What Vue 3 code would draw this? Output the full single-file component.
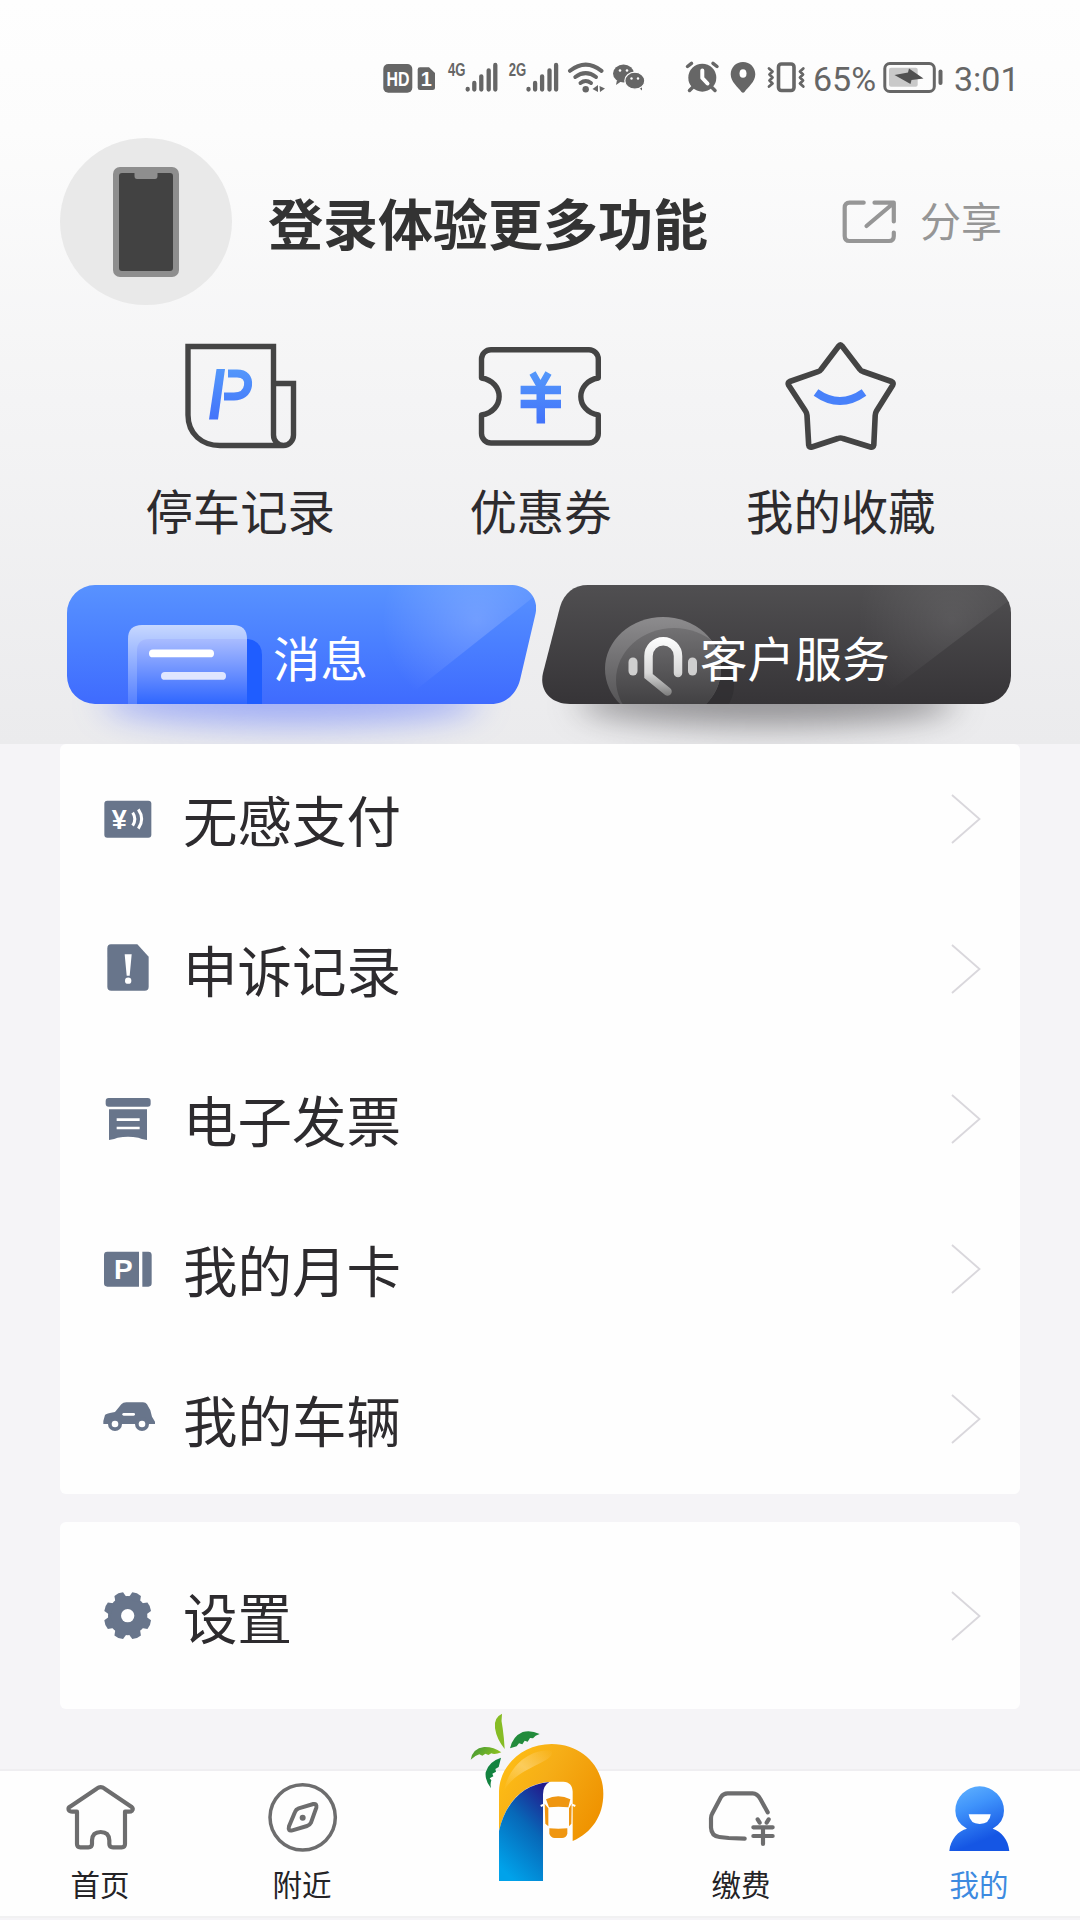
<template>
  <div class="page">
    <header class="hero">
      <!-- status bar -->
      <div class="status">
        <svg class="status-left" viewBox="0 0 270 40" width="270" height="40">
          <rect x="3.3" y="6" width="29" height="28.7" rx="5" fill="#666" />
          <text x="6.4" y="27.8" font-size="19.5" font-weight="700" fill="#fff" textLength="23" lengthAdjust="spacingAndGlyphs">HD</text>
          <path d="M40 9.3H49L55 15V29.5Q55 32 52.5 32H40Q37.7 32 37.7 29.5V11.5Q37.7 9.3 40 9.3Z" fill="#666" />
          <text x="46.3" y="28" font-size="20" font-weight="700" fill="#fff" text-anchor="middle">1</text>
          <g v-for="s in signals" :key="s.label" :transform="`translate(${s.x} 0)`">
            <text x="68" y="17.8" font-size="18.5" font-weight="700" fill="#666" textLength="17.5" lengthAdjust="spacingAndGlyphs">{{ s.label }}</text>
            <path d="M87.7 31V31.5M94.3 25V31.5M101.3 18.3V31.5M108.7 12.3V31.5M115.3 7V31.5" stroke="#666" stroke-width="4.3" stroke-linecap="round" />
          </g>
          <g fill="none" stroke="#666" stroke-width="4" stroke-linecap="round">
            <path d="M190 12.8Q205.7 0.5 221.5 12.8" />
            <path d="M195.3 19Q205.7 11.3 216 19" />
            <path d="M200.5 25Q205.7 21 211 25" />
          </g>
          <circle cx="205.7" cy="31.3" r="3.2" fill="#666" />
          <path d="M212.5 31L218 27V34ZM219.5 28L225 30.5L220 34Z" fill="#666" />
          <path d="M237 22L236 27L241 23.5Z" fill="#666" />
          <ellipse cx="243.5" cy="15.5" rx="10.5" ry="9" fill="#666" />
          <path d="M258 29L262 32.5L262 27Z" fill="#666" />
          <ellipse cx="254.8" cy="22.7" rx="10" ry="8.5" fill="#666" stroke="#fdfdfd" stroke-width="1.2" />
          <g fill="#fdfdfd">
            <circle cx="240" cy="12.5" r="1.3" />
            <circle cx="247" cy="12.5" r="1.3" />
            <circle cx="251.5" cy="20.5" r="1.2" />
            <circle cx="258" cy="20.5" r="1.2" />
          </g>
        </svg>
        <svg class="status-mid" viewBox="0 0 130 40" width="130" height="40">
          <g fill="none" stroke="#666" stroke-linecap="round" stroke-linejoin="round">
            <circle cx="22.3" cy="19.7" r="14" fill="#666" stroke="none" />
            <path d="M7.5 8.5L11.5 5.3M33 5.3L37 8.5M9.5 32.5L13 29M31.5 29L35 32.5" stroke-width="3.5" />
            <path d="M22.3 12.5V20L27.5 25.5" stroke="#fff" stroke-width="4" />
            <path d="M63 4C56 4 50.7 9.5 50.7 16.3C50.7 24 58 29 61.5 34Q63 35.5 64.5 34C68 29 75.3 24 75.3 16.3C75.3 9.5 70 4 63 4Z" fill="#666" stroke="none" />
            <ellipse cx="63" cy="15.5" rx="3.5" ry="4.3" fill="#fff" stroke="none" />
            <rect x="98.5" y="6" width="15.5" height="26.5" rx="3" stroke-width="3.6" />
            <path d="M89 10.5L92.5 13.5L89.5 16.5L92.5 19.5L89.5 22.5L92.5 25.5L89 28.5M123.3 10.5L120 13.5L123 16.5L120 19.5L123 22.5L120 25.5L123.3 28.5" stroke-width="2.8" />
          </g>
        </svg>
        <span class="percent">65%</span>
        <svg class="battery" viewBox="0 0 64 40" width="64" height="40">
          <rect x="2.8" y="5.5" width="49.5" height="28" rx="5" fill="none" stroke="#666" stroke-width="3" />
          <rect x="7" y="9.7" width="28.7" height="19" rx="2" fill="#c9c9c9" />
          <path d="M12.5 17L26 14.5L27 10.5L41.5 20.5L29.500 22L28.500 26Z" fill="#505050" />
          <rect x="56.5" y="11.5" width="4" height="15.5" rx="2" fill="#666" />
        </svg>
        <span class="clock">3:01</span>
      </div>

      <!-- login row -->
      <div class="profile">
        <div class="avatar">
          <svg viewBox="0 0 66 110" width="66" height="110">
            <rect width="66" height="110" rx="7" fill="#8e8e8e" />
            <path d="M9 6H21.5V9Q21.5 12 24 12H42Q44.5 12 44.5 9V6H57Q60 6 60 9V101Q60 104 57 104H9Q6 104 6 101V9Q6 6 9 6Z" fill="#424242" />
          </svg>
        </div>
        <h1>登录体验更多功能</h1>
        <div class="share">
          <svg viewBox="0 0 62 52" width="62" height="52" fill="none" stroke="#969696" stroke-width="4.2" stroke-linecap="round" stroke-linejoin="round">
            <path d="M25.7 6.7H11.5Q6.7 6.7 6.7 11.5V40Q6.7 45 11.5 45H51Q55.8 45 55.8 40V36.5" />
            <path d="M36.5 6.7H55.8V25.5M54.5 8L28.5 30" />
          </svg>
          <span>分享</span>
        </div>
      </div>

      <!-- shortcuts -->
      <div class="shortcuts">
        <div v-for="item in shortcuts" :key="item.icon" class="shortcut">
          <svg v-if="item.icon === 'record'" viewBox="0 0 122 116" width="122" height="116" fill="none" stroke="#444" stroke-width="5.4">
            <defs>
              <linearGradient id="blue" x1="0" y1="30" x2="0" y2="82" gradientUnits="userSpaceOnUse">
                <stop offset="0" stop-color="#5498fb" />
                <stop offset="1" stop-color="#4272fa" />
              </linearGradient>
            </defs>
            <g transform="translate(1 0)">
              <path d="M104 107.5H40C22 107.5 8 96 8 77V8.5H93.5V97A10 10.500 0 0 0 113.5 97V45.5H93.5" />
              <path d="M36.5 31H45L38 81.5H29Z" fill="url(#blue)" stroke="none" />
              <path d="M48 35.5H57C65 35.5 69 40 68 47.5C67 55 61 58.5 54 58.5H44" stroke="url(#blue)" stroke-width="8" />
            </g>
          </svg>
          <svg v-else-if="item.icon === 'coupon'" viewBox="0 0 130 116" width="130" height="116" fill="none" stroke="#444" stroke-width="5.4">
            <g transform="translate(0 4)">
              <path d="M16 7.7H114A9.5 9.5 0 0 1 123.3 17V36C100 40 100 69 123.3 73V91.5A9.5 9.5 0 0 1 114 101H16A9.5 9.5 0 0 1 6.5 91.5V73C30 69 30 40 6.5 36V17A9.5 9.5 0 0 1 16 7.7Z" stroke-linejoin="round" />
              <g stroke="url(#blue)">
                <path d="M57.5 31L65.5 45L73.5 31" stroke-width="7" />
                <path d="M65.7 44L65.8 81.5" stroke-width="8.5" />
                <path d="M45.6 48L86 48.1M45.6 62L86 62.1" stroke-width="8.5" />
              </g>
            </g>
          </svg>
          <svg v-else viewBox="0 0 122 116" width="122" height="116" fill="none" stroke="#444" stroke-width="5.6" stroke-linejoin="round">
            <g transform="translate(0 -1.5)">
              <path d="M58.8 9.5Q60.4 7 62 9.5L80 33Q81 34.500 83 35L111.500 45Q114 46.300 112.800 48.500L96.500 74.500Q95.300 76.500 95.200 79L93.800 108.500Q93.300 111.300 90.500 110.500L63 102Q60.400 101 57.800 102L32 110.500Q29 111.300 28.700 108.500L27 79Q26.900 76.500 25.500 74.500L8.500 48.500Q7.300 46.300 9.800 45L38 35.200Q40 34.500 41 33Z" />
              <path d="M36 56Q60 73 84 56" stroke="#4881fa" stroke-width="8" />
            </g>
          </svg>
          <span>{{ item.text }}</span>
        </div>
      </div>

      <!-- message / service buttons -->
      <div class="actions">
        <div class="action message">
          <svg class="shape" viewBox="0 0 469 119" width="469" height="119">
            <defs>
              <linearGradient id="msgBg" x1="0" y1="0" x2="0" y2="1">
                <stop offset="0" stop-color="#5892ff" />
                <stop offset="0.5" stop-color="#4a7fff" />
                <stop offset="1" stop-color="#3f6bfe" />
              </linearGradient>
              <linearGradient id="msgCard" x1="0" y1="0" x2="0" y2="1">
                <stop offset="0" stop-color="#c7d8ff" />
                <stop offset="1" stop-color="#5580ff" />
              </linearGradient>
              <linearGradient id="msgInner" x1="0" y1="0" x2="0" y2="1">
                <stop offset="0" stop-color="#a9bcff" />
                <stop offset="1" stop-color="#2f66ff" />
              </linearGradient>
              <radialGradient id="shine" cx="410" cy="35" r="95" gradientUnits="userSpaceOnUse">
                <stop offset="0" stop-color="#fff" stop-opacity="0.19" />
                <stop offset="1" stop-color="#fff" stop-opacity="0" />
              </radialGradient>
              <clipPath id="msgClip">
                <path d="M28 0H443C461 0 473 13 468 31L453 95C449 110 438 119 424 119H28A28 28 0 0 1 0 91V28A28 28 0 0 1 28 0Z" />
              </clipPath>
            </defs>
            <g clip-path="url(#msgClip)">
              <rect width="469" height="119" fill="url(#msgBg)" />
              <path d="M310 0H469V10L345 108H310Z" fill="url(#shine)" />
              <path d="M160 54H181Q195 56 195 70V119H160Z" fill="#1f5dff" />
              <path d="M61 119V54Q61 40 75 40H166Q180 40 180 54V119Z" fill="url(#msgCard)" />
              <path d="M70 119V66Q70 54 82 54H180V119Z" fill="url(#msgInner)" />
              <rect x="82" y="64.5" width="65" height="7.8" rx="3.9" fill="#fff" />
              <rect x="94" y="87" width="65" height="7.8" rx="3.9" fill="#dfe6ff" />
            </g>
          </svg>
          <span>消息</span>
        </div>
        <div class="action service">
          <svg class="shape" viewBox="0 0 469 119" width="469" height="119">
            <defs>
              <linearGradient id="svcBg" x1="0" y1="0" x2="0" y2="1">
                <stop offset="0" stop-color="#504f51" />
                <stop offset="1" stop-color="#363437" />
              </linearGradient>
              <linearGradient id="svcRing" x1="0" y1="32" x2="0" y2="119" gradientUnits="userSpaceOnUse">
                <stop offset="0" stop-color="#8d8c8e" />
                <stop offset="1" stop-color="#555456" />
              </linearGradient>
              <linearGradient id="svcInner" x1="0" y1="43" x2="0" y2="119" gradientUnits="userSpaceOnUse">
                <stop offset="0" stop-color="#727173" />
                <stop offset="1" stop-color="#424143" />
              </linearGradient>
              <linearGradient id="svcPhone" x1="0" y1="52" x2="0" y2="112" gradientUnits="userSpaceOnUse">
                <stop offset="0" stop-color="#fff" />
                <stop offset="0.6" stop-color="#d8d8d8" />
                <stop offset="1" stop-color="#777" />
              </linearGradient>
              <clipPath id="svcClip">
                <path d="M46 0H441A28 28 0 0 1 469 28V91A28 28 0 0 1 441 119H28C8 119 -3 105 1 88L18 22C22 8 32 0 46 0Z" />
              </clipPath>
              <clipPath id="ringClip">
                <ellipse cx="121" cy="84" rx="58" ry="52" />
              </clipPath>
            </defs>
            <g clip-path="url(#svcClip)">
              <rect width="469" height="119" fill="url(#svcBg)" />
              <path d="M310 0H469V14L345 108H310Z" fill="url(#shine)" opacity="0.5" />
              <ellipse cx="136" cy="100" rx="56" ry="46" fill="#2f2d30" opacity="0.7" />
              <ellipse cx="121" cy="84" rx="58" ry="52" fill="url(#svcRing)" />
              <ellipse cx="132" cy="95" rx="58" ry="52" fill="url(#svcInner)" clip-path="url(#ringClip)" />
              <path d="M136 88V71A14.7 14.7 0 0 0 106.5 71V91L125.5 106.5" fill="none" stroke="url(#svcPhone)" stroke-width="8.5" stroke-linecap="round" />
              <rect x="86.5" y="72.5" width="9" height="18" rx="4.5" fill="#cfcfcf" />
              <rect x="146" y="72.5" width="9" height="18" rx="4.5" fill="#cfcfcf" />
            </g>
          </svg>
          <span>客户服务</span>
        </div>
      </div>
    </header>

    <!-- menu lists -->
    <section v-for="(group, gi) in menus" :key="gi" class="card" :class="{ single: group.length === 1 }">
      <div v-for="row in group" :key="row.icon" class="row">
        <svg class="row-icon" viewBox="0 0 168 156" width="56" height="52" fill="#68758b">
          <template v-if="row.icon === 'pay'">
            <rect x="10" y="23" width="141" height="111" rx="9" />
            <text x="55" y="107" font-size="81" font-weight="700" fill="#fff" text-anchor="middle">¥</text>
            <path d="M95 59Q108 78 95 98M112 49Q132 78 112 107" fill="none" stroke="#fff" stroke-width="9" />
          </template>
          <template v-else-if="row.icon === 'appeal'">
            <path d="M30 4H109L143 41V131Q143 143 131 143H31Q19 143 19 131V16Q19 4 30 4Z" />
            <path d="M71 34H92L86 98H77Z" fill="#fff" />
            <circle cx="81.5" cy="113" r="9.5" fill="#fff" />
          </template>
          <template v-else-if="row.icon === 'invoice'">
            <rect x="14" y="15" width="135" height="26" rx="9" />
            <path d="M24 49H138V141Q120 138 112 134Q81 128 50 134Q42 138 24 141Z" />
            <path d="M47 80H116M47 105H116" stroke="#fff" stroke-width="8" />
          </template>
          <template v-else-if="row.icon === 'month'">
            <path d="M19 26H114V131H19Q9 131 9 121V36Q9 26 19 26ZM124 26H142Q152 26 152 36V121Q152 131 142 131H124Z" />
            <text x="67" y="108" font-size="84" font-weight="700" fill="#fff" text-anchor="middle">P</text>
          </template>
          <template v-else-if="row.icon === 'car'">
            <path d="M7 93V84L12 66Q15 61 42 57L61 34Q66 28 76 28H126Q134 28 138 34L148 52L153 71L162 86V93Z" />
            <circle cx="42" cy="93" r="21" />
            <circle cx="123" cy="93" r="21" />
            <circle cx="42" cy="93" r="10" fill="#fff" />
            <circle cx="123" cy="93" r="10" fill="#fff" />
            <path d="M68 64H98" stroke="#fff" stroke-width="8" stroke-linecap="round" />
          </template>
          <template v-else>
            <g transform="translate(0 -2)">
              <circle cx="80" cy="79" r="59" />
              <path v-for="n in 8" :key="n" d="M61 30L66 9Q80 4 94 9L99 30Z" :transform="`rotate(${n * 45 - 22.5} 80 79)`" />
              <circle cx="80" cy="79" r="20" fill="#fff" />
            </g>
          </template>
        </svg>
        <span class="row-text">{{ row.text }}</span>
        <svg class="arrow" viewBox="0 0 32 52" width="32" height="52">
          <path d="M2 2L29.5 26L2 50" fill="none" stroke="#d9d7dc" stroke-width="1.8" />
        </svg>
      </div>
    </section>

    <!-- bottom tabs -->
    <nav class="tabs">
      <div class="tab">
        <svg viewBox="0 0 225 216" width="75" height="72" fill="none" stroke="#6d6d6e" stroke-width="12.5" stroke-linejoin="round">
          <path d="M101 20Q113 11 125 20L205 74Q212 80 207 86Q204 89 198 89H186V186Q186 196 176 196H150Q139 196 139 186V175Q138 150 113 150Q88 150 87 175V186Q87 196 76 196H52Q42 196 42 186V89H28Q20 89 17 84Q15 77 21 74Z" />
        </svg>
        <span>首页</span>
      </div>
      <div class="tab">
        <svg viewBox="0 0 225 216" width="75" height="72" fill="none" stroke="#6d6d6e" stroke-width="10.5" stroke-linejoin="round">
          <circle cx="113" cy="106" r="98" />
          <path d="M101 79Q93 82 90 90L72 133Q68 149 82 145L126 132Q134 130 138 122L154 77Q156 64 145 66Z" stroke-width="12" />
          <circle cx="113" cy="107" r="9" fill="#6d6d6e" stroke="none" />
        </svg>
        <span>附近</span>
      </div>
      <div class="tab logo">
        <svg viewBox="90 60 410 520" width="136.7" height="173.3">
          <defs>
            <linearGradient id="sun" x1="0.1" y1="0.2" x2="1" y2="0.7">
              <stop offset="0" stop-color="#fdbb14" />
              <stop offset="0.35" stop-color="#f6ae17" />
              <stop offset="1" stop-color="#ef9200" />
            </linearGradient>
            <linearGradient id="sea" x1="0.8" y1="0" x2="0.3" y2="1">
              <stop offset="0" stop-color="#231a8c" />
              <stop offset="0.45" stop-color="#0768b8" />
              <stop offset="1" stop-color="#00a2ea" />
            </linearGradient>
            <linearGradient id="leaf" x1="0" y1="0" x2="1" y2="0.4">
              <stop offset="0" stop-color="#3c9438" />
              <stop offset="1" stop-color="#8fc31f" />
            </linearGradient>
            <linearGradient id="gloss" x1="0" y1="1" x2="1" y2="0">
              <stop offset="0" stop-color="#fff" stop-opacity="0" />
              <stop offset="0.5" stop-color="#fff" stop-opacity="0.3" />
              <stop offset="1" stop-color="#fff" stop-opacity="0" />
            </linearGradient>
          </defs>
          <path d="M186 68Q160 80 165 112Q170 145 194 174Q192 140 188 112Q182 90 186 68Z" fill="#86bc25" />
          <path d="M210 172Q218 136 248 123Q272 116 299 129Q285 133 279 142L270 141L263 152L254 149L247 160L237 157L230 166Z" fill="#228b3c" />
          <path d="M92 206Q98 172 132 168Q160 167 184 184Q164 192 154 187L145 192L136 188L127 194L118 190Q102 195 92 206Z" fill="url(#leaf)" />
          <path d="M183 200Q145 212 137 244Q134 268 153 292Q150 278 154 268L149 262L160 256L157 248L168 242L166 234L176 228Z" fill="#138340" />
          <path d="M177 420V300C180 220 250 159 335 159C425 159 490 225 490 308C490 375 455 425 398 450V302C398 285 388 272 370 272H335C260 275 200 320 177 420Z" fill="url(#sun)" />
          <path d="M192 300C205 225 270 172 335 178C350 215 230 225 192 300Z" fill="url(#gloss)" />
          <path d="M177 570V420C195 340 245 280 328 273Q309 284 309 310V570Z" fill="url(#sea)" />
          <path d="M318 325Q355 306 391 325L385 349Q355 345 327 349Z" fill="#ef9611" />
          <path d="M314 338L325 352V406L316 398ZM395 338L387 352V406L394 398ZM328 412Q355 415 382 412V428Q378 441 366 441H344Q332 440 328 428Z" fill="#ef9611" />
          <path d="M302 345L312 341M396 341L406 345" stroke="#fff" stroke-width="6" />
        </svg>
      </div>
      <div class="tab">
        <svg viewBox="0 0 225 216" width="75" height="72" fill="none" stroke="#6d6d6e" stroke-width="12.5" stroke-linecap="round" stroke-linejoin="round">
          <g transform="translate(9 19)">
            <path d="M182 72L160 32Q151 15 137 15H62Q49 15 42 26L15 77Q12 82 12 90V118Q13 143 37 146L65 149L113 151" />
            <path d="M152 93L158 103M185 93L179 103M139 117H197M139 143H197M168 117V167" />
          </g>
        </svg>
        <span>缴费</span>
      </div>
      <div class="tab active">
        <svg viewBox="0 0 225 216" width="75" height="72">
          <defs>
            <linearGradient id="me" x1="30" y1="0" x2="110" y2="200" gradientUnits="userSpaceOnUse">
              <stop offset="0" stop-color="#62b4ff" />
              <stop offset="0.35" stop-color="#3f93fb" />
              <stop offset="0.85" stop-color="#1556e4" />
            </linearGradient>
          </defs>
          <g transform="translate(15 9)">
            <path d="M7 198C10 163 34 137 60 131Q25 112 25 77A73 73 0 0 1 171 77Q171 112 137 131C163 140 184 163 187 198Z" fill="url(#me)" />
            <path d="M65 88H131Q128 117 98 117Q69 117 65 88Z" fill="#fff" />
          </g>
        </svg>
        <span>我的</span>
      </div>
    </nav>
  </div>
</template>

<script setup>
const signals = [
  { label: "4G", x: 0 },
  { label: "2G", x: 60.8 },
];

const shortcuts = [
  { icon: "record", text: "停车记录" },
  { icon: "coupon", text: "优惠券" },
  { icon: "star", text: "我的收藏" },
];

const menus = [
  [
    { icon: "pay", text: "无感支付" },
    { icon: "appeal", text: "申诉记录" },
    { icon: "invoice", text: "电子发票" },
    { icon: "month", text: "我的月卡" },
    { icon: "car", text: "我的车辆" },
  ],
  [{ icon: "setting", text: "设置" }],
];
</script>

<style>
body {
  margin: 0;
  background: #f5f4f7;
}
</style>

<style scoped>
.page {
  width: 1080px;
  height: 1920px;
  display: flex;
  flex-direction: column;
  overflow: hidden;
  background: #f5f4f7;
  color: #2d2b2e;
  font-family: "Liberation Sans", "Noto Sans CJK SC", sans-serif;
}

svg {
  display: block;
  flex-shrink: 0;
}

.hero {
  height: 744px;
  flex-shrink: 0;
  overflow: hidden;
  background: linear-gradient(#fefefe 0, #fcfcfc 130px, #f4f4f5 400px, #ebebed 744px);
}

.status {
  box-sizing: border-box;
  height: 138px;
  padding: 18px 0 0 380px;
  display: flex;
  align-items: center;
  color: #666;
  font-family: Roboto, sans-serif;
  font-size: 34px;
}

.status text {
  font-family: "Liberation Sans", sans-serif;
}

.status-mid {
  margin-left: 30px;
}

.percent {
  width: 69px;
  margin: 2px 0 0 3px;
}

.clock {
  margin: 2px 0 0 8px;
}

.profile {
  height: 167px;
  padding-left: 60px;
  display: flex;
  align-items: center;
}

.avatar {
  width: 172px;
  height: 167px;
  border-radius: 50%;
  background: #e9e9e9;
  display: flex;
  align-items: center;
  justify-content: center;
}

.profile h1 {
  width: 438px;
  margin: 9px 0 0 36px;
  color: #333;
  font-size: 55px;
  line-height: 70px;
  font-weight: 700;
  white-space: nowrap;
}

.share {
  margin-left: 132px;
  display: flex;
  align-items: center;
  gap: 20px;
  color: #969696;
  font-size: 41px;
  line-height: 50px;
}

.share span {
  margin-top: 3px;
}

.shortcuts {
  height: 280px;
  box-sizing: border-box;
  padding: 33px 89px 0 90px;
  display: grid;
  grid-template-columns: repeat(3, 1fr);
}

.shortcut {
  display: flex;
  flex-direction: column;
  align-items: center;
  font-size: 47.4px;
  line-height: 60px;
}

.shortcut span {
  margin-top: 30px;
}

.actions {
  padding-left: 67px;
  display: flex;
  gap: 6px;
}

.action {
  position: relative;
  width: 469px;
  height: 119px;
  display: flex;
  align-items: center;
  color: #fff;
  font-size: 47.4px;
  line-height: 60px;
}

/* soft glow under each button */
.action::before {
  content: "";
  position: absolute;
  left: 35px;
  right: 55px;
  bottom: -22px;
  height: 50px;
  border-radius: 50%;
  filter: blur(16px);
  background: rgba(70, 100, 255, 0.45);
}

.service::before {
  background: rgba(50, 48, 52, 0.48);
}

.shape {
  position: absolute;
  left: 0;
  top: 0;
}

.action span {
  position: relative;
  margin: 32px 0 0 206px;
}

.service span {
  margin-left: 158px;
}

.card {
  width: 960px;
  margin: 0 auto 28px;
  flex-shrink: 0;
  border-radius: 6px;
  background: #fefefe;
}

.row {
  height: 150px;
  box-sizing: border-box;
  padding: 0 38px 0 41px;
  display: flex;
  align-items: center;
}

.single .row {
  height: 187px;
}

.row-text {
  margin: 10px 0 0 26px;
  font-size: 54.5px;
  line-height: 70px;
}

.arrow {
  margin-left: auto;
}

.tabs {
  box-sizing: border-box;
  height: 149px;
  margin-top: 32px;
  padding-top: 11px;
  flex-shrink: 0;
  display: grid;
  grid-template-columns: 200px 204px 268px 138px 270px;
  background: #fefefe;
  border-top: 2px solid #efeef1;
  border-bottom: 2px solid #f1f1f2;
}

.tab {
  display: flex;
  flex-direction: column;
  align-items: center;
  color: #242326;
  font-size: 29.5px;
  line-height: 40px;
}

.tab span {
  margin-top: 12px;
}

.logo {
  margin-top: -71px;
}

.active {
  padding-left: 68px;
  color: #3d8ae0;
}
</style>
